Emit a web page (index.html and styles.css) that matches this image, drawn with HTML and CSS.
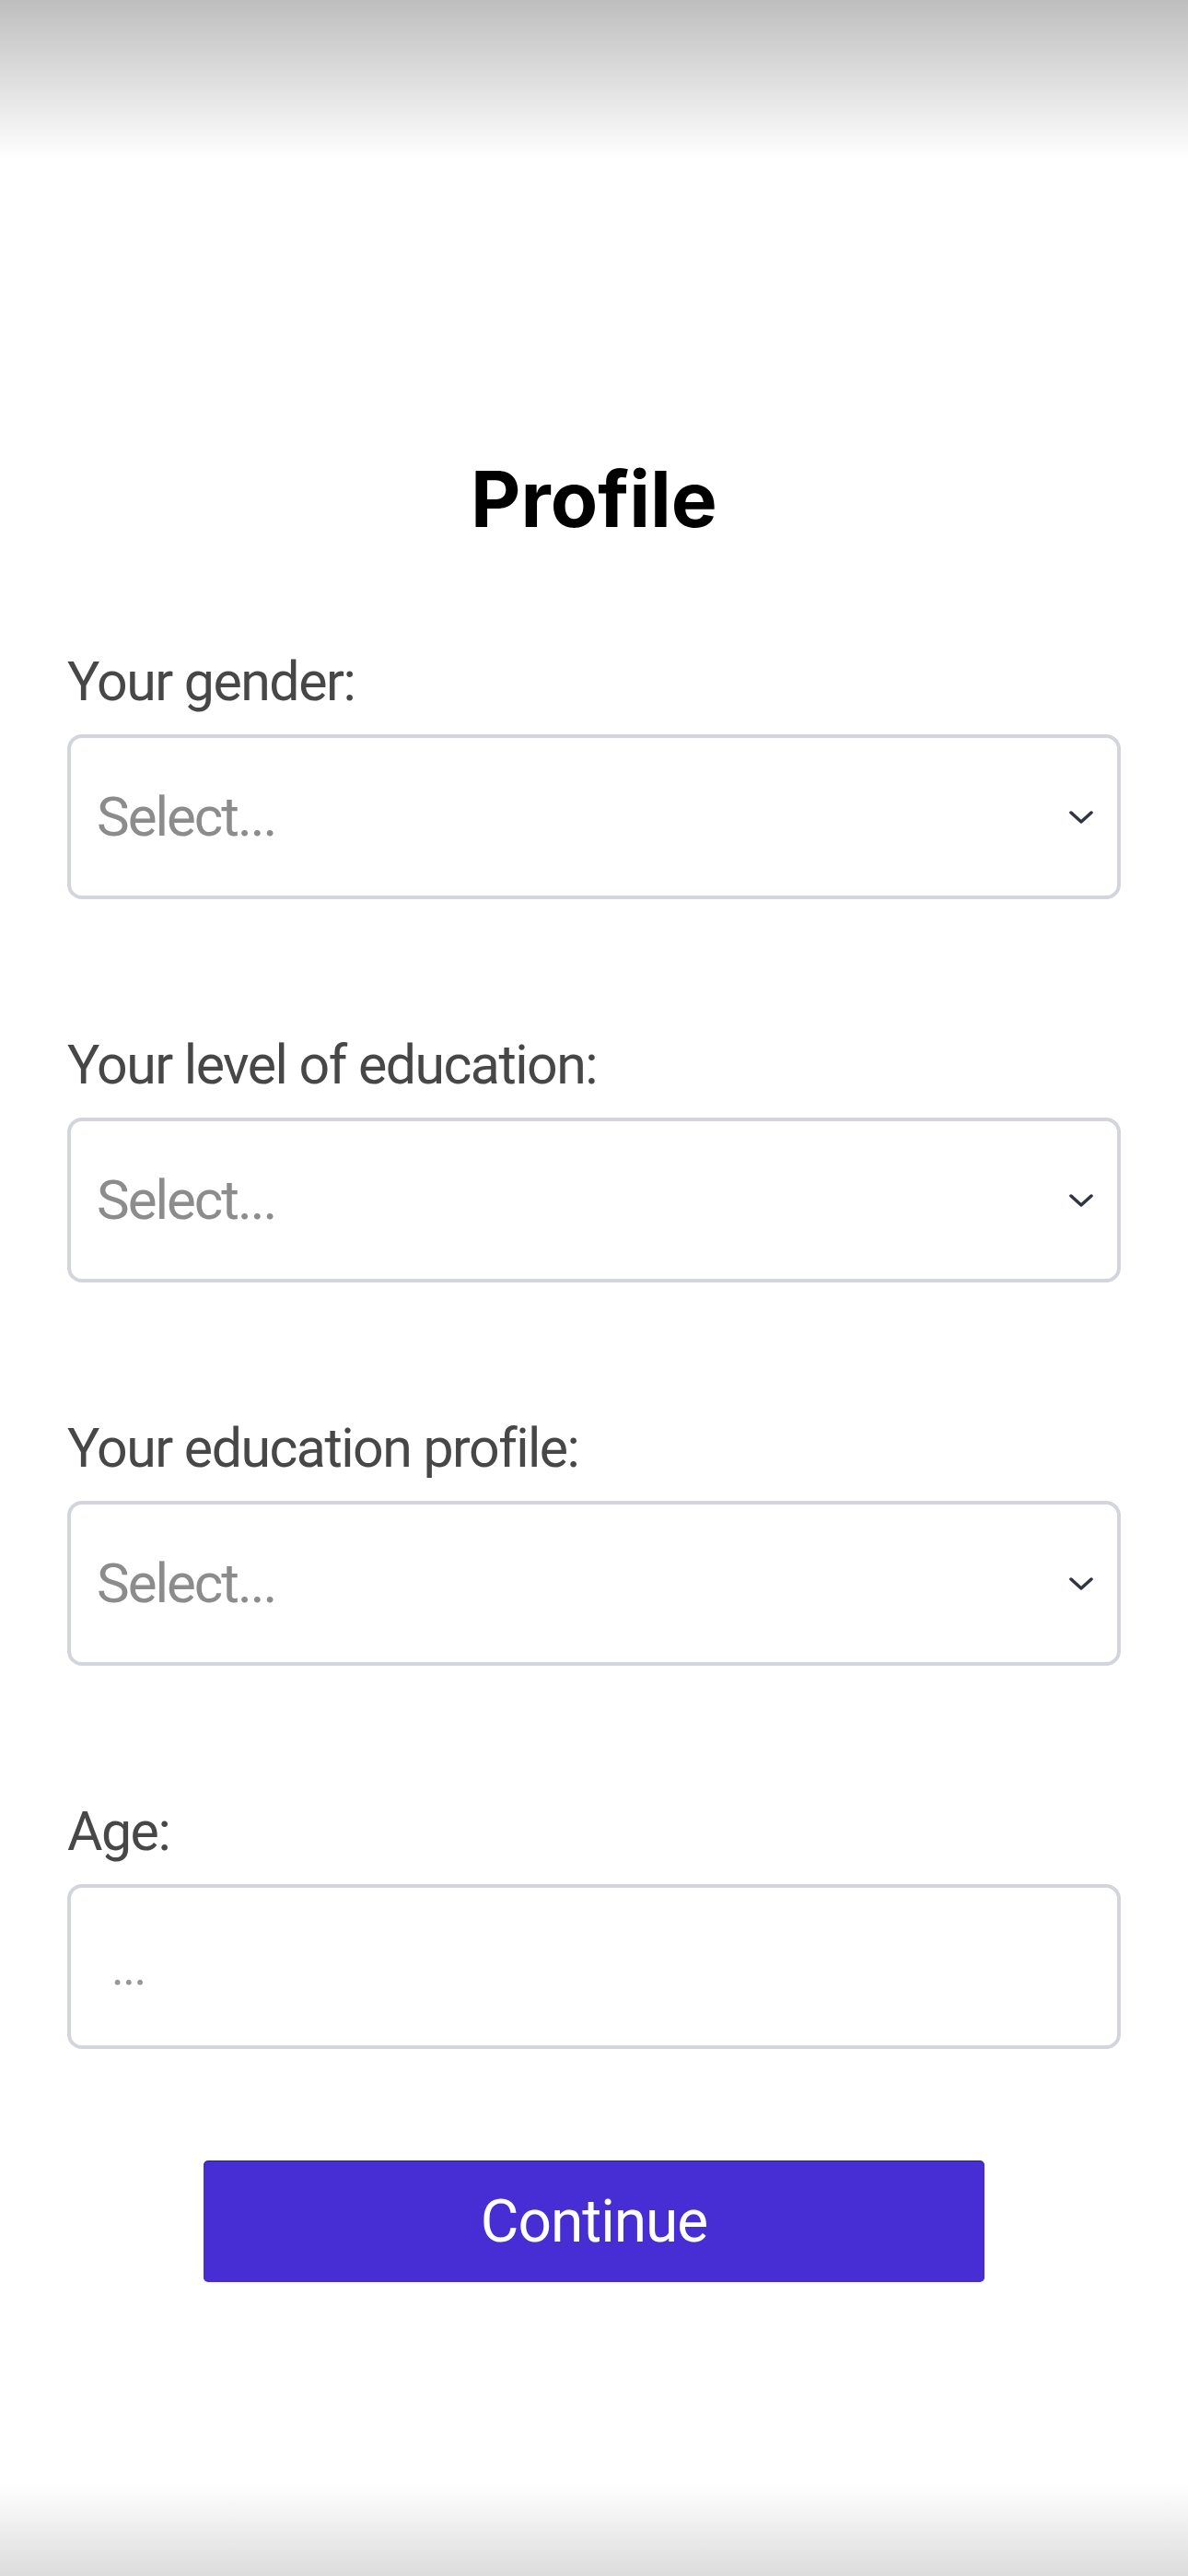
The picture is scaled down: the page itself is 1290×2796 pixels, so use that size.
FILE: index.html
```html
<!DOCTYPE html>
<html lang="en">

<head>
  <meta charset="UTF-8">
  <meta name="viewport" content="width=device-width, initial-scale=1.0">
  <title>Profile</title>
  <link rel="stylesheet" href="styles.css">
</head>

<body>
  <div class="screen">
    <div class="shade-top"></div>

    <main class="profile">
      <h1 class="title">Profile</h1>

      <form class="fields">
        <div class="field">
          <label class="label">Your gender:</label>
          <div class="select">
            <span class="placeholder">Select...</span>
            <svg class="chevron" width="26" height="14" viewBox="0 0 26 14">
              <path d="M2 2 L13 12 L24 2" />
            </svg>
          </div>
        </div>

        <div class="field">
          <label class="label">Your level of education:</label>
          <div class="select">
            <span class="placeholder">Select...</span>
            <svg class="chevron" width="26" height="14" viewBox="0 0 26 14">
              <path d="M2 2 L13 12 L24 2" />
            </svg>
          </div>
        </div>

        <div class="field">
          <label class="label">Your education profile:</label>
          <div class="select">
            <span class="placeholder">Select...</span>
            <svg class="chevron" width="26" height="14" viewBox="0 0 26 14">
              <path d="M2 2 L13 12 L24 2" />
            </svg>
          </div>
        </div>

        <div class="field">
          <label class="label">Age:</label>
          <div class="input">
            <span class="dots">...</span>
          </div>
        </div>
      </form>

      <button class="continue" type="button">Continue</button>
    </main>

    <div class="shade-bottom"></div>
  </div>
</body>

</html>
```

FILE: styles.css
```css
* {
  margin: 0;
  padding: 0;
  box-sizing: border-box;
}

body {
  background: #fff;
  font-family: Roboto, "Noto Sans", sans-serif;
}

.screen {
  min-height: 2796px;
  display: flex;
  flex-direction: column;
}

.shade-top {
  height: 173px;
  background: linear-gradient(#bebebe, #fff);
}

.shade-bottom {
  margin-top: auto;
  height: 101px;
  background: linear-gradient(#fff, #dcdcdc);
}

.profile {
  display: flex;
  flex-direction: column;
  padding: 327px 73px 0;
}

.title {
  font-family: Inter, "Noto Sans", sans-serif;
  font-weight: 700;
  font-size: 84px;
  line-height: 84px;
  text-align: center;
  color: #000;
}

.fields {
  display: flex;
  flex-direction: column;
  gap: 150px;
  margin-top: 126px;
}

.field {
  display: flex;
  flex-direction: column;
  gap: 28px;
}

.label {
  font-size: 59px;
  line-height: 59px;
  letter-spacing: -1.5px;
  color: #474747;
}

.select,
.input {
  height: 179px;
  border: 4px solid #d3d5dc;
  border-radius: 16px;
  display: flex;
  align-items: center;
}

.select {
  justify-content: space-between;
  padding: 0 26px 0 28px;
}

.placeholder {
  font-size: 60px;
  line-height: 60px;
  letter-spacing: -2px;
  color: #8c8c8c;
}

.chevron path {
  fill: none;
  stroke: #2f3542;
  stroke-width: 3.5;
  stroke-linecap: round;
  stroke-linejoin: round;
}

.input {
  padding: 4px 0 0 44px;
}

.dots {
  font-size: 52px;
  line-height: 52px;
  letter-spacing: -1.5px;
  color: #979797;
}

.continue {
  align-self: center;
  width: 848px;
  height: 131px;
  margin-top: 122px;
  border: 0;
  border-radius: 5px;
  background: #462ed4;
  box-shadow: 0 -1px 0 #2b1f80;
  color: #fff;
  font-family: Roboto, "Noto Sans", sans-serif;
  font-size: 64px;
  letter-spacing: -1px;
}
```
